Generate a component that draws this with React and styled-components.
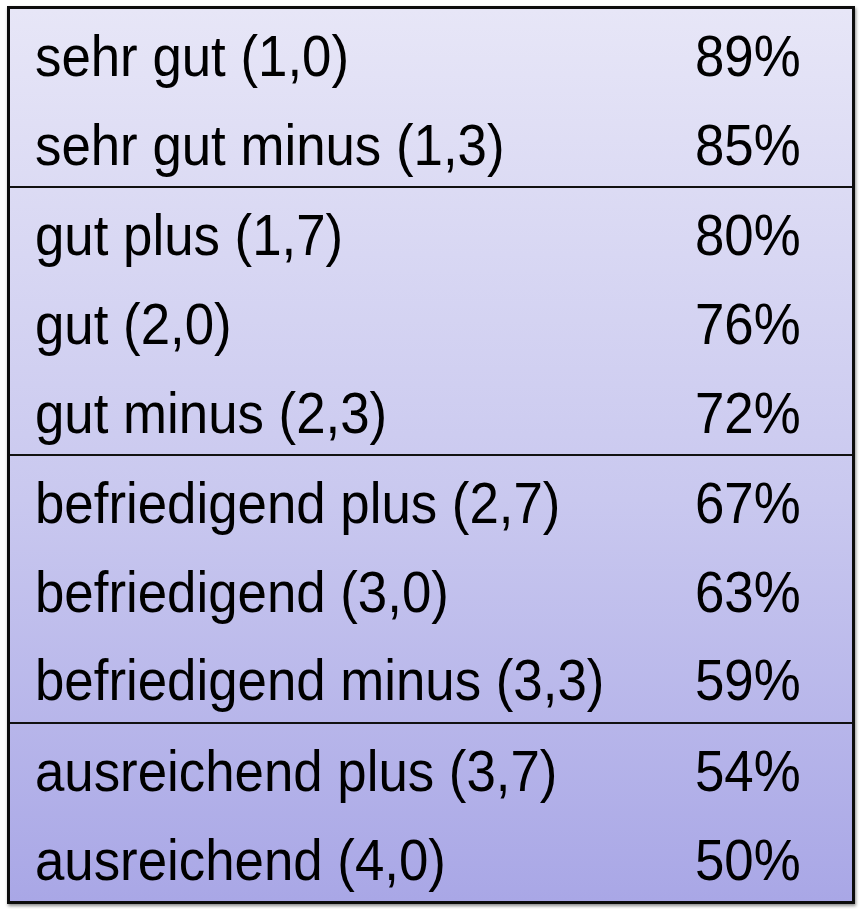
import React from "react";
import styled, { createGlobalStyle } from "styled-components";

const Global = createGlobalStyle`
  html, body { margin: 0; padding: 0; background: #ffffff; }
  body { font-family: "Liberation Sans", Arial, Helvetica, sans-serif; }
`;

const Page = styled.div`
  width: 861px;
  height: 909px;
  padding: 6px 0 0 7px;
  box-sizing: border-box;
`;

const Table = styled.div`
  width: 848px;
  height: 898px;
  box-sizing: border-box;
  border: 3px solid #0d0d0d;
  background: linear-gradient(180deg, #e7e6f7 0%, #c9c8ef 55%, #a9a7e6 100%);
  box-shadow: 1px 2px 3px rgba(0, 0, 0, 0.45);
  display: flex;
  flex-direction: column;
`;

const Group = styled.div`
  display: flex;
  flex-direction: column;
  border-top: ${(p) => (p.$first ? "none" : "2px solid #111")};
`;

const Row = styled.div`
  height: 88.6px;
  display: grid;
  grid-template-columns: 660px 1fr;
  padding-left: 25px;
  align-items: center;
  box-sizing: border-box;
  padding-top: 8px;
`;

const Cell = styled.span`
  display: inline-block;
  font-size: 52.8px;
  line-height: 60px;
  color: #000;
  white-space: nowrap;
  transform: scaleY(1.075);
  transform-origin: left center;
`;

const groups = [
  [
    ["sehr gut (1,0)", "89%"],
    ["sehr gut minus (1,3)", "85%"],
  ],
  [
    ["gut plus (1,7)", "80%"],
    ["gut (2,0)", "76%"],
    ["gut minus (2,3)", "72%"],
  ],
  [
    ["befriedigend plus (2,7)", "67%"],
    ["befriedigend (3,0)", "63%"],
    ["befriedigend minus (3,3)", "59%"],
  ],
  [
    ["ausreichend plus (3,7)", "54%"],
    ["ausreichend (4,0)", "50%"],
  ],
];

export default function App() {
  return (
    <Page>
      <Global />
      <Table>
        {groups.map((g, gi) => (
          <Group key={gi} $first={gi === 0}>
            {g.map(([label, value]) => (
              <Row key={label}>
                <Cell>{label}</Cell>
                <Cell>{value}</Cell>
              </Row>
            ))}
          </Group>
        ))}
      </Table>
    </Page>
  );
}
